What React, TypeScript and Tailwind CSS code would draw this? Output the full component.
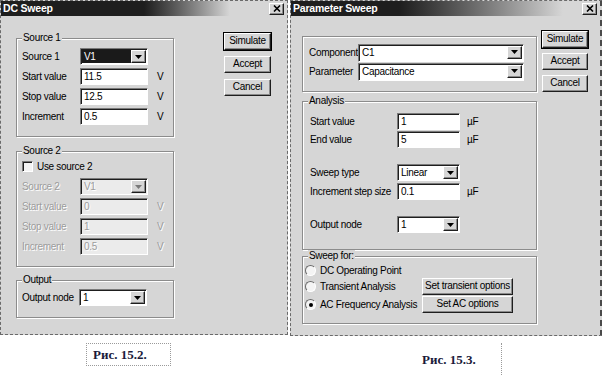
import React from 'react';

const sunken =
  'border border-t-[#7a7a7a] border-l-[#7a7a7a] border-b-white border-r-white shadow-[inset_1px_1px_0_#1e1e1e]';
const raised =
  'border border-t-white border-l-white border-b-[#1e1e1e] border-r-[#1e1e1e] shadow-[inset_-1px_-1px_0_#8a8a8a]';
const greyText = 'text-[#9c9c9c] [text-shadow:1px_1px_0_#ffffff]';

type FieldProps = { value: string; className: string; disabled?: boolean };

const Field: React.FC<FieldProps> = ({ value, className, disabled }) => (
  <div
    className={`h-[17px] pl-[3px] leading-[15px] ${sunken} ${
      disabled ? `bg-[#ebebeb] ${greyText}` : 'bg-white text-black'
    } ${className}`}
  >
    {value}
  </div>
);

type ComboProps = FieldProps & { selected?: boolean };

const Combo: React.FC<ComboProps> = ({ value, className, disabled, selected }) => (
  <div
    className={`h-[17px] flex ${sunken} ${disabled ? 'bg-[#ebebeb]' : 'bg-white'} ${className}`}
  >
    <div
      className={`flex-1 pl-[2px] mt-[1px] ml-[1px] h-[13px] leading-[13px] ${
        selected ? 'bg-[#1a1a1a] text-white' : disabled ? greyText : 'text-black'
      }`}
    >
      {value}
    </div>
    <div
      className={`w-[15px] h-[13px] mt-[1px] mr-[1px] bg-[#d6d6d6] flex items-center justify-center ${raised}`}
    >
      <svg width="7" height="4" viewBox="0 0 7 4">
        <polygon points="0,0 7,0 3.5,4" fill={disabled ? '#7a7a7a' : '#000000'} />
      </svg>
    </div>
  </div>
);

type BtnProps = { label: string; className: string; isDefault?: boolean };

const Btn: React.FC<BtnProps> = ({ label, className, isDefault }) => (
  <div
    className={`h-[17px] bg-[#d6d6d6] text-black text-center leading-[14px] whitespace-nowrap ${raised} ${
      isDefault ? 'outline outline-1 outline-black' : ''
    } ${className}`}
  >
    {label}
  </div>
);

type GroupProps = { title?: string; className: string; children: React.ReactNode };

const Group: React.FC<GroupProps> = ({ title, className, children }) => (
  <div
    className={`relative border border-[#8c8c8c] shadow-[1px_1px_0_#ffffff,inset_1px_1px_0_#ffffff] ${className}`}
  >
    {title && (
      <span className="absolute left-[5px] -top-[7px] bg-[#d6d6d6] px-[1px] leading-[12px] text-black">
        {title}
      </span>
    )}
    {children}
  </div>
);

const TitleBar: React.FC<{ title: string; grad: string }> = ({ title, grad }) => (
  <div className={`h-[15px] flex items-center pl-[2px] ${grad}`}>
    <span className="flex-1 text-white font-bold text-[10.5px] tracking-[-0.2px]">{title}</span>
    <div
      className={`w-[15px] h-[12px] mr-[3px] bg-[#d6d6d6] flex items-center justify-center ${raised}`}
    >
      <svg width="8" height="7" viewBox="0 0 8 7">
        <path d="M1 0.5 L7 6.5 M7 0.5 L1 6.5" stroke="#000" strokeWidth="1.6" />
      </svg>
    </div>
  </div>
);

const Row: React.FC<{ label: string; labelW: string; grey?: boolean; children: React.ReactNode }> = ({
  label,
  labelW,
  grey,
  children,
}) => (
  <div className="h-[17px] flex items-center">
    <span className={`${labelW} whitespace-nowrap ${grey ? greyText : 'text-black'}`}>{label}</span>
    {children}
  </div>
);

const DCSweep: React.FC = () => (
  <div className="w-[288px] h-[335px] bg-[#d6d6d6] border border-dashed border-[#6a6a6a] flex flex-col">
    <TitleBar
      title="DC Sweep"
      grad="bg-linear-to-r from-[#1e1e1e] from-50% to-[#d6d6d6] to-80%"
    />
    <div className="flex">
      <div className="ml-[15px] mt-[22px] w-[158px] flex flex-col">
        <Group title="Source 1" className="h-[99px] pt-[9px] pl-[5px]">
          <div className="flex flex-col gap-[3px]">
            <Row label="Source 1" labelW="w-[58px]">
              <Combo value="V1" className="w-[68px]" selected />
            </Row>
            <Row label="Start value" labelW="w-[58px]">
              <Field value="11.5" className="w-[68px]" />
              <span className="ml-[9px]">V</span>
            </Row>
            <Row label="Stop value" labelW="w-[58px]">
              <Field value="12.5" className="w-[68px]" />
              <span className="ml-[9px]">V</span>
            </Row>
            <Row label="Increment" labelW="w-[58px]">
              <Field value="0.5" className="w-[68px]" />
              <span className="ml-[9px]">V</span>
            </Row>
          </div>
        </Group>

        <Group title="Source 2" className="mt-[14px] h-[116px] pt-[9px] pl-[5px]">
          <div className="flex items-center h-[11px]">
            <div className={`w-[11px] h-[11px] bg-[#f4f4f4] ${sunken}`} />
            <span className="ml-[4px] text-black">Use source 2</span>
          </div>
          <div className="flex flex-col gap-[3px] mt-[6px]">
            <Row label="Source 2" labelW="w-[58px]" grey>
              <Combo value="V1" className="w-[68px]" disabled />
            </Row>
            <Row label="Start value" labelW="w-[58px]" grey>
              <Field value="0" className="w-[68px]" disabled />
              <span className={`ml-[9px] ${greyText}`}>V</span>
            </Row>
            <Row label="Stop value" labelW="w-[58px]" grey>
              <Field value="1" className="w-[68px]" disabled />
              <span className={`ml-[9px] ${greyText}`}>V</span>
            </Row>
            <Row label="Increment" labelW="w-[58px]" grey>
              <Field value="0.5" className="w-[68px]" disabled />
              <span className={`ml-[9px] ${greyText}`}>V</span>
            </Row>
          </div>
        </Group>

        <Group title="Output" className="mt-[13px] h-[38px] pt-[8px] pl-[5px]">
          <Row label="Output node" labelW="w-[57px]">
            <Combo value="1" className="w-[68px]" />
          </Row>
        </Group>
      </div>

      <div className="ml-[50px] mt-[17px] w-[47px] flex flex-col gap-[6px]">
        <Btn label="Simulate" className="w-[47px]" isDefault />
        <Btn label="Accept" className="w-[47px]" />
        <Btn label="Cancel" className="w-[47px]" />
      </div>
    </div>
  </div>
);

const Radio: React.FC<{ label: string; checked?: boolean }> = ({ label, checked }) => (
  <div className="flex items-center w-[117px] whitespace-nowrap">
    <div className="w-[11px] h-[11px] rounded-full bg-[#f4f4f4] border border-t-[#6a6a6a] border-l-[#6a6a6a] border-b-white border-r-white flex items-center justify-center">
      {checked && <div className="w-[4px] h-[4px] rounded-full bg-black" />}
    </div>
    <span className="ml-[4px] text-black">{label}</span>
  </div>
);

const ParameterSweep: React.FC = () => (
  <div className="w-[312px] h-[336px] bg-[#d6d6d6] border border-dashed border-[#6a6a6a] border-r-2 border-r-[#4a4a4a] flex flex-col">
    <TitleBar
      title="Parameter Sweep"
      grad="bg-linear-to-r from-[#1e1e1e] from-35% to-[#d6d6d6] to-88%"
    />
    <div className="flex">
      <div className="ml-[11px] mt-[20px] w-[235px] flex flex-col">
        <Group className="h-[56px] pt-[7px] pl-[6px]">
          <div className="flex flex-col gap-[2px]">
            <Row label="Component" labelW="w-[49px]">
              <Combo value="C1" className="w-[166px] h-[18px]" />
            </Row>
            <Row label="Parameter" labelW="w-[49px]">
              <Combo value="Capacitance" className="w-[166px] h-[18px]" />
            </Row>
          </div>
        </Group>

        <Group title="Analysis" className="mt-[9px] h-[149px] pt-[11px] pl-[7px]">
          <div className="flex flex-col">
            <Row label="Start value" labelW="w-[87px]">
              <Field value="1" className="w-[63px] h-[16px]" />
              <span className="ml-[7px]">µF</span>
            </Row>
            <div className="mt-[1px]">
              <Row label="End value" labelW="w-[87px]">
                <Field value="5" className="w-[63px] h-[16px]" />
                <span className="ml-[7px]">µF</span>
              </Row>
            </div>
            <div className="mt-[16px]">
              <Row label="Sweep type" labelW="w-[87px]">
                <Combo value="Linear" className="w-[63px] h-[16px]" />
              </Row>
            </div>
            <div className="mt-[2px]">
              <Row label="Increment step size" labelW="w-[87px]">
                <Field value="0.1" className="w-[63px] h-[16px]" />
                <span className="ml-[7px]">µF</span>
              </Row>
            </div>
            <div className="mt-[16px]">
              <Row label="Output node" labelW="w-[87px]">
                <Combo value="1" className="w-[63px]" />
              </Row>
            </div>
          </div>
        </Group>

        <Group title="Sweep for:" className="mt-[6px] h-[68px] pt-[5px] pl-[2px]">
          <div className="h-[16px] flex items-center">
            <Radio label="DC Operating Point" />
          </div>
          <div className="h-[17px] flex items-center">
            <Radio label="Transient Analysis" />
            <Btn label="Set transient options" className="w-[91px]" />
          </div>
          <div className="mt-[1px] h-[17px] flex items-center">
            <Radio label="AC Frequency Analysis" checked />
            <Btn label="Set AC options" className="w-[91px]" />
          </div>
        </Group>
      </div>

      <div className="ml-[5px] mt-[15px] w-[46px] flex flex-col gap-[5px]">
        <Btn label="Simulate" className="w-[46px]" isDefault />
        <Btn label="Accept" className="w-[46px]" />
        <Btn label="Cancel" className="w-[46px]" />
      </div>
    </div>
  </div>
);

const App: React.FC = () => {
  return (
    <div className="w-[604px] h-[376px] bg-white overflow-hidden font-['Liberation_Sans',Arial,sans-serif] text-[10px] tracking-[-0.3px]">
      <div className="flex gap-[2px]">
        <DCSweep />
        <ParameterSweep />
      </div>
      <div className="flex">
        <div className="ml-[86px] mt-[7px] w-[85px] h-[23px] border border-dotted border-[#9a9a9a] flex items-center pl-[6px] font-['Liberation_Serif',serif] font-bold text-[13px] tracking-normal text-[#1a1a3a]">
          Рис. 15.2.
        </div>
        <div className="ml-[247px] mt-[7px] w-[84px] h-[34px] border-r border-b border-dotted border-[#9a9a9a] flex items-center pl-[4px] font-['Liberation_Serif',serif] font-bold text-[13px] tracking-normal text-[#1a1a3a]">
          Рис. 15.3.
        </div>
      </div>
    </div>
  );
};

export default App;
